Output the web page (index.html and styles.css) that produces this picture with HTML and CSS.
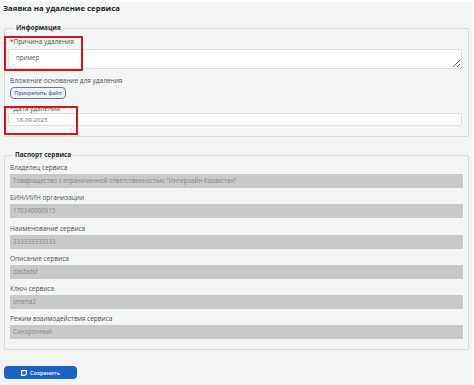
FILE: index.html
```html
<!DOCTYPE html>
<html lang="ru">
<head>
<meta charset="utf-8">
<title>Заявка на удаление сервиса</title>
<link rel="stylesheet" href="styles.css">
</head>
<body>
<div class="page">
  <h1 class="title">Заявка на удаление сервиса</h1>

  <fieldset class="group group-info">
    <legend class="legend">Информация</legend>
    <div class="field">
      <label class="label label-reason"><span class="req">*</span>Причина удаления</label>
      <textarea class="textarea">пример</textarea>
    </div>
    <div class="field field-attach">
      <label class="label">Вложение основание для удаления</label>
      <div class="attach-row"><button class="btn-attach" type="button">Прикрепить файл</button></div>
    </div>
    <div class="field field-date">
      <label class="label label-date"><span class="req">*</span>Дата удаления</label>
      <input class="input" type="text" value="18-09-2023">
    </div>
    <div class="mark mark-reason"></div>
    <div class="mark mark-date"></div>
  </fieldset>

  <fieldset class="group group-passport">
    <legend class="legend legend-passport">Паспорт сервиса</legend>
    <div class="pfield">
      <div class="label">Владелец сервиса</div>
      <div class="ro">Товарищество с ограниченной ответственностью "Интерлайн Казахстан"</div>
    </div>
    <div class="pfield">
      <div class="label">БИН/ИИН организации</div>
      <div class="ro">170340000915</div>
    </div>
    <div class="pfield">
      <div class="label">Наименование сервиса</div>
      <div class="ro">333333333333</div>
    </div>
    <div class="pfield">
      <div class="label">Описание сервиса</div>
      <div class="ro">dasfadsf</div>
    </div>
    <div class="pfield">
      <div class="label">Ключ сервиса</div>
      <div class="ro">smena2</div>
    </div>
    <div class="pfield">
      <div class="label">Режим взаимодействия сервиса</div>
      <div class="ro">Синхронный</div>
    </div>
  </fieldset>

  <button class="btn-save" type="button">
    <svg class="save-icon" width="6" height="6" viewBox="0 0 6 6" aria-hidden="true">
      <path d="M0.6 0.6 H5.4 V3.8 L3.8 5.4 H0.6 Z" fill="none" stroke="#fff" stroke-width="1.1"/>
    </svg>
    Сохранить
  </button>
</div>
</body>
</html>
```

FILE: styles.css
```css
html, body {
  margin: 0;
  padding: 0;
  background: #ffffff;
}

body {
  font-family: "Open Sans", "Noto Sans", sans-serif;
  color: #4a4a4a;
}

.page {
  width: 472px;
  height: 383px;
  margin-top: 2px;
  background: #f3f4f4;
  box-sizing: border-box;
  padding: 0 3px 0 3px;
  display: flex;
  flex-direction: column;
  align-items: stretch;
}

.title {
  margin: 0 0 10px 0;
  font-size: 7.8px;
  line-height: 12px;
  font-weight: 700;
  color: #1f1f1f;
}

.group {
  position: relative;
  margin: 0 0 0 1px;
  border: 1px solid #d9dbdb;
  border-radius: 2px;
  padding: 0 6px 10px 3px;
  background: #f4f5f5;
  min-width: 0;
}

.legend {
  font-size: 6.4px;
  line-height: 8px;
  font-weight: 700;
  color: #2a2a2a;
  padding: 0 2px;
  margin-left: 6px;
}

.legend-passport {
  margin-left: 3px;
}

.group-info {
  display: flex;
  flex-direction: column;
  padding-top: 6px;
  padding-bottom: 10px;
}

.field {
  display: flex;
  flex-direction: column;
}

.label {
  font-size: 6.5px;
  line-height: 8px;
  color: #505050;
  padding-left: 2px;
  white-space: nowrap;
}

.req {
  color: #d0121b;
}

.label-reason {
  margin-bottom: 3px;
}

.textarea {
  box-sizing: border-box;
  height: 20px;
  margin: 0;
  padding: 3px 7px;
  border: 1px solid #dcdcdc;
  border-radius: 1px;
  background: #ffffff;
  font-family: "Open Sans", "Noto Sans", sans-serif;
  font-size: 6.2px;
  line-height: 9px;
  color: #555;
  resize: vertical;
  overflow: hidden;
}

.field-attach {
  margin-top: 8px;
}

.attach-row {
  display: flex;
  margin-top: 2px;
  padding-left: 2px;
}

.btn-attach {
  box-sizing: border-box;
  width: 56px;
  height: 12px;
  padding: 0;
  border: 1px solid #6a7796;
  border-radius: 4px;
  background: #eef1f6;
  font-family: "Open Sans", "Noto Sans", sans-serif;
  font-size: 5.4px;
  line-height: 10px;
  color: #2e3f6a;
}

.field-date {
  margin-top: 6px;
}

.label-date {
  margin-bottom: 0;
}

.input {
  box-sizing: border-box;
  height: 13px;
  margin: 0;
  padding: 0 7px;
  border: 1px solid #dcdcdc;
  border-radius: 1px;
  background: #ffffff;
  font-family: "Open Sans", "Noto Sans", sans-serif;
  font-size: 6px;
  color: #666;
}

.mark {
  position: absolute;
  border: 2px solid #d9131e;
  box-sizing: border-box;
}

.mark-reason {
  left: -1px;
  top: 4px;
  width: 79px;
  height: 35px;
}

.mark-date {
  left: -1px;
  top: 74px;
  width: 74px;
  height: 29px;
}

.group-passport {
  margin-top: 14px;
  padding: 5px 5px 10px 5px;
  display: flex;
  flex-direction: column;
  gap: 6.3px;
}

.pfield {
  display: flex;
  flex-direction: column;
  gap: 2px;
}

.pfield .label {
  padding-left: 0;
}

.ro {
  height: 14px;
  box-sizing: border-box;
  padding: 0 3px;
  border-radius: 1px;
  background: #c8c9c9;
  font-size: 6.2px;
  line-height: 14px;
  color: #858585;
  white-space: nowrap;
  overflow: hidden;
}

.btn-save {
  align-self: flex-start;
  margin-top: 16px;
  margin-left: 1px;
  box-sizing: border-box;
  width: 73px;
  height: 13px;
  padding: 0;
  border: none;
  border-radius: 4px;
  background: #1b62c6;
  color: #ffffff;
  font-family: "Open Sans", "Noto Sans", sans-serif;
  font-size: 5.5px;
  font-weight: 600;
  display: flex;
  align-items: center;
  justify-content: center;
  gap: 3px;
}

.save-icon {
  display: block;
}
```
